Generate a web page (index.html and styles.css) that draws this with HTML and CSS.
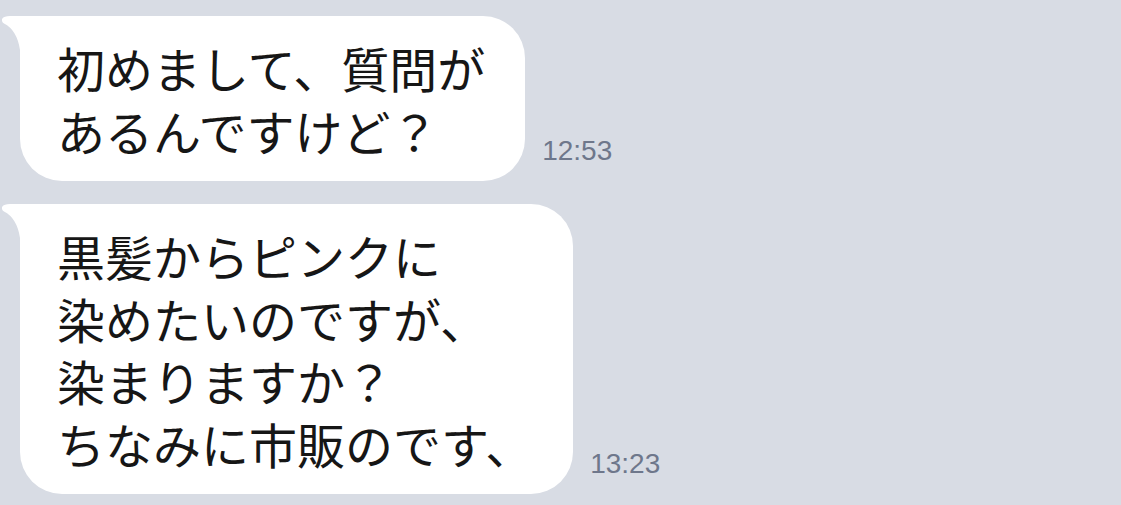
FILE: index.html
```html
<!DOCTYPE html>
<html>
<head>
    <title>Chat</title>
    <link rel="stylesheet" href="styles.css">
</head>
<body>
    <div class="chat">
        <!-- message 1 -->
        <div class="row">
            <div class="bubble">
                <svg class="tail" width="60" height="50" viewBox="0 0 60 50">
                    <path d="M0 3 C1.5 0.8 4 0 8 0 L60 0 L60 50 L18 50 L18 34 Q15 14 2 7.5 Q-0.6 5.8 0 3 Z" fill="#ffffff"/>
                </svg>
                <p class="text">初めまして、質問が<br>あるんですけど？</p>
            </div>
            <span class="time">12:53</span>
        </div>

        <!-- message 2 -->
        <div class="row">
            <div class="bubble">
                <svg class="tail" width="60" height="50" viewBox="0 0 60 50">
                    <path d="M0 3 C1.5 0.8 4 0 8 0 L60 0 L60 50 L18 50 L18 34 Q15 14 2 7.5 Q-0.6 5.8 0 3 Z" fill="#ffffff"/>
                </svg>
                <p class="text">黒髪からピンクに<br>染めたいのですが、<br>染まりますか？<br>ちなみに市販のです、</p>
            </div>
            <span class="time">13:23</span>
        </div>
    </div>
</body>
</html>
```

FILE: styles.css
```css
body {
    margin: 0;
    background: #d8dce4;
    font-family: "Noto Sans CJK JP", "Noto Sans", sans-serif;
    height: 100vh;
    overflow: hidden;
}

.chat {
    display: flex;
    flex-direction: column;
    gap: 23px;
    padding: 16px 0 0 20px;
}

.row {
    display: flex;
    align-items: flex-end;
    gap: 17px;
}

.bubble {
    position: relative;
    background: #ffffff;
    border-radius: 42px;
    padding: 20px 40px 20px 37px;
}

.tail {
    position: absolute;
    left: -18px;
    top: 0;
}

.text {
    position: relative;
    margin: 0;
    font-size: 48px;
    line-height: 62.5px;
    color: #161616;
    white-space: nowrap;
}

.time {
    font-family: "Liberation Sans", Arial, sans-serif;
    font-size: 28px;
    line-height: 28px;
    color: #6e778b;
    margin-bottom: 16px;
}
```
